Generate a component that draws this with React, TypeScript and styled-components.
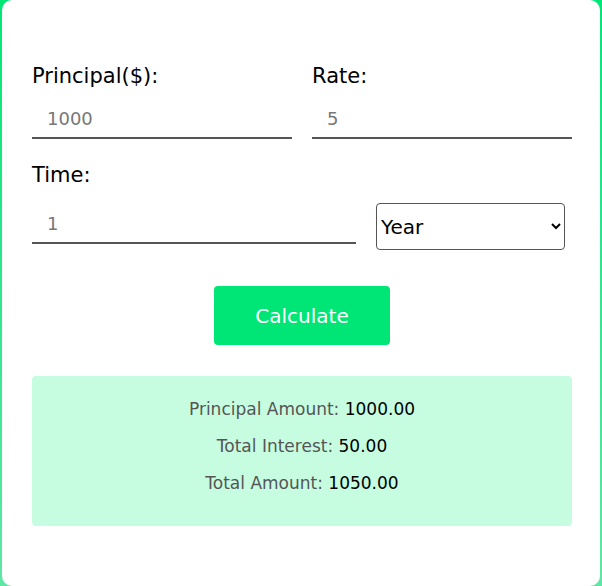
import React from "react";
import styled, { createGlobalStyle } from "styled-components";

const Global = createGlobalStyle`
  html, body { margin: 0; padding: 0; }
  body {
    background: linear-gradient(180deg, #00e676 0%, #5fe6a6 100%);
    min-height: 586px;
    font-family: "DejaVu Sans", "Noto Sans", sans-serif;
  }
`;

const Card = styled.div`
  box-sizing: border-box;
  margin-left: 2px;
  width: 598px;
  height: 586px;
  background: #fff;
  border-radius: 10px;
  padding: 58px 28px 0 30px;
`;

const Row = styled.div<{ $cols: string; $gap: number }>`
  display: grid;
  grid-template-columns: ${(p) => p.$cols};
  column-gap: ${(p) => p.$gap}px;
  align-items: end;
  width: 540px;
`;

const Field = styled.div`
  display: flex;
  flex-direction: column;
`;

const Label = styled.label<{ $gap: number }>`
  font-size: 21px;
  color: #000;
  line-height: 36px;
  margin-bottom: ${(p) => p.$gap}px;
`;

const Input = styled.input`
  box-sizing: border-box;
  width: 100%;
  height: 39px;
  border: none;
  border-bottom: 2px solid #555;
  outline: none;
  padding: 0 15px;
  font-family: inherit;
  font-size: 18px;
  color: #777;
  background: transparent;
`;

const Select = styled.select`
  box-sizing: border-box;
  width: 189px;
  height: 47px;
  border: 1px solid #555;
  border-radius: 4px;
  font-family: inherit;
  font-size: 20px;
  color: #000;
  background: #fff;
  padding: 0;
  margin-bottom: -6px;
`;

const TimeBlock = styled.div`
  margin-top: 18px;
`;

const ButtonWrap = styled.div`
  display: flex;
  justify-content: center;
  width: 540px;
  margin-top: 42px;
`;

const Button = styled.button`
  width: 176px;
  height: 59px;
  border: none;
  border-radius: 4px;
  background: #00e676;
  color: #fff;
  font-family: inherit;
  font-size: 20px;
  cursor: pointer;
`;

const Result = styled.div`
  box-sizing: border-box;
  width: 540px;
  height: 150px;
  margin-top: 31px;
  background: #c6fde1;
  border-radius: 4px;
  padding-top: 21px;
  display: flex;
  flex-direction: column;
  align-items: center;
  gap: 13px;
`;

const Line = styled.div`
  font-size: 17px;
  line-height: 24px;
  color: #555;
`;

const Value = styled.span`
  color: #000;
  font-weight: 500;
`;

export default function App() {
  return (
    <>
      <Global />
      <Card>
        <Row $cols="1fr 1fr" $gap={20}>
          <Field>
            <Label $gap={6}>Principal($):</Label>
            <Input defaultValue="1000" />
          </Field>
          <Field>
            <Label $gap={6}>Rate:</Label>
            <Input defaultValue="5" />
          </Field>
        </Row>
        <TimeBlock>
          <Row $cols="324px 189px" $gap={20}>
            <Field>
              <Label $gap={12}>Time:</Label>
              <Input defaultValue="1" />
            </Field>
            <Select defaultValue="Year">
              <option>Year</option>
              <option>Month</option>
              <option>Day</option>
            </Select>
          </Row>
        </TimeBlock>
        <ButtonWrap>
          <Button>Calculate</Button>
        </ButtonWrap>
        <Result>
          <Line>
            Principal Amount: <Value>1000.00</Value>
          </Line>
          <Line>
            Total Interest: <Value>50.00</Value>
          </Line>
          <Line>
            Total Amount: <Value>1050.00</Value>
          </Line>
        </Result>
      </Card>
    </>
  );
}
